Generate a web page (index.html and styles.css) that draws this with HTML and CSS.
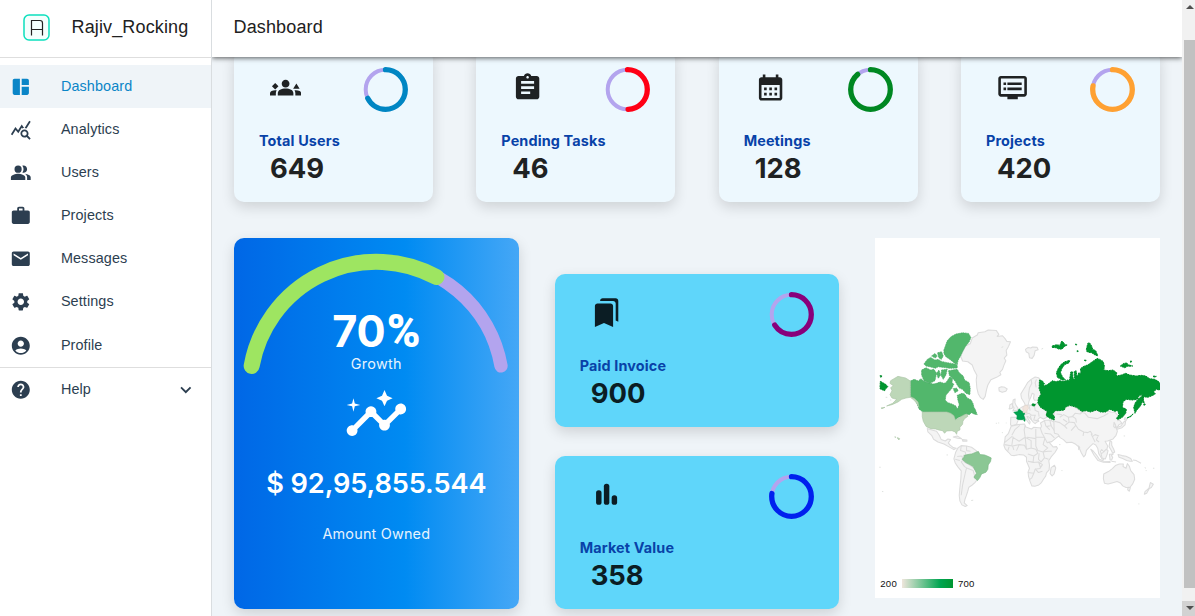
FILE: index.html
```html
<!DOCTYPE html>
<html lang="en">
<head>
<meta charset="utf-8">
<title>Dashboard</title>
<link rel="stylesheet" href="styles.css">
</head>
<body>
<div class="app">
  <aside class="sidebar">
    <div class="brand">
      <svg class="brand-logo" viewBox="0 0 27 27"><rect x="1" y="1" width="25" height="25" rx="5" fill="#f4fffd" stroke="#0be0bd" stroke-width="1.5"/><path d="M8.500 21.500V6.500H17q2.500 0 2.500 2.500v12.500M8.500 15.500h11" fill="none" stroke="#222" stroke-width="1.2"/></svg>
      <span>Rajiv_Rocking</span>
    </div>
    <nav class="nav">
      <a class="nav-item active"><svg viewBox="0 0 24 24"><path d="M11 21H5c-1.1 0-2-.9-2-2V5c0-1.1.9-2 2-2h6v18zm2 0h6c1.1 0 2-.9 2-2v-7h-8v9zm8-11V5c0-1.1-.9-2-2-2h-6v7h8z"/></svg><span>Dashboard</span></a>
      <a class="nav-item"><svg viewBox="0 0 24 24"><path d="M19.88 18.47c.44-.7.7-1.51.7-2.39 0-2.49-2.01-4.5-4.5-4.5s-4.5 2.01-4.5 4.5 2.01 4.5 4.49 4.5c.88 0 1.7-.26 2.39-.7L21.58 23 23 21.58l-3.12-3.11zm-3.8.11c-1.38 0-2.5-1.12-2.5-2.5s1.12-2.5 2.5-2.5 2.5 1.12 2.5 2.5-1.12 2.5-2.5 2.5zm-.36-8.5c-.74.02-1.45.18-2.1.45l-.55-.83-3.8 6.18-3.01-3.52-3.63 5.81L1 17l5-8 3 3.5L13 6l2.72 4.08zm2.59.5c-.64-.28-1.33-.45-2.05-.49L21.38 2 23 3.18l-4.69 7.4z"/></svg><span>Analytics</span></a>
      <a class="nav-item"><svg viewBox="0 0 24 24"><path d="M16.67 13.13C18.04 14.06 19 15.32 19 17v3h4v-3c0-2.18-3.57-3.47-6.33-3.87zM15 12c2.21 0 4-1.79 4-4s-1.79-4-4-4c-.47 0-.91.1-1.33.24C14.5 5.27 15 6.58 15 8s-.5 2.73-1.33 3.76c.42.14.86.24 1.33.24zM9 12a4 4 0 1 0 0-8 4 4 0 0 0 0 8zm0 1c-2.67 0-8 1.34-8 4v3h16v-3c0-2.66-5.33-4-8-4z"/></svg><span>Users</span></a>
      <a class="nav-item"><svg viewBox="0 0 24 24"><path d="M20 6h-4V4c0-1.11-.89-2-2-2h-4c-1.11 0-2 .89-2 2v2H4c-1.11 0-1.99.89-1.99 2L2 19c0 1.11.89 2 2 2h16c1.11 0 2-.89 2-2V8c0-1.11-.89-2-2-2zm-6 0h-4V4h4v2z"/></svg><span>Projects</span></a>
      <a class="nav-item"><svg viewBox="0 0 24 24"><path d="M20 4H4c-1.1 0-1.99.9-1.99 2L2 18c0 1.1.9 2 2 2h16c1.1 0 2-.9 2-2V6c0-1.1-.9-2-2-2zm0 4l-8 5-8-5V6l8 5 8-5v2z"/></svg><span>Messages</span></a>
      <a class="nav-item"><svg viewBox="0 0 24 24"><path d="M19.14 12.94c.04-.3.06-.61.06-.94 0-.32-.02-.64-.07-.94l2.03-1.58c.18-.14.23-.41.12-.61l-1.92-3.32c-.12-.22-.37-.29-.59-.22l-2.39.96c-.5-.38-1.03-.7-1.62-.94l-.36-2.54c-.04-.24-.24-.41-.48-.41h-3.84c-.24 0-.43.17-.47.41l-.36 2.54c-.59.24-1.13.57-1.62.94l-2.39-.96c-.22-.08-.47 0-.59.22L2.74 8.87c-.12.21-.08.47.12.61l2.03 1.58c-.05.3-.09.63-.09.94s.02.64.07.94l-2.03 1.58c-.18.14-.23.41-.12.61l1.92 3.32c.12.22.37.29.59.22l2.39-.96c.5.38 1.03.7 1.62.94l.36 2.54c.05.24.24.41.48.41h3.84c.24 0 .44-.17.47-.41l.36-2.54c.59-.24 1.13-.56 1.62-.94l2.39.96c.22.08.47 0 .59-.22l1.92-3.32c.12-.22.07-.47-.12-.61l-2.01-1.58zM12 15.6c-1.98 0-3.6-1.62-3.6-3.6s1.62-3.6 3.6-3.6 3.6 1.62 3.6 3.6-1.62 3.6-3.6 3.6z"/></svg><span>Settings</span></a>
      <a class="nav-item low"><svg viewBox="0 0 24 24"><path d="M12 2C6.48 2 2 6.48 2 12s4.48 10 10 10 10-4.48 10-10S17.52 2 12 2zm0 4c1.93 0 3.5 1.57 3.5 3.5S13.93 13 12 13s-3.5-1.57-3.5-3.5S10.07 6 12 6zm0 14c-2.03 0-4.43-.82-6.14-2.88C7.55 15.8 9.68 15 12 15s4.45.8 6.14 2.12C16.43 19.18 14.03 20 12 20z"/></svg><span>Profile</span></a>
      <a class="nav-item low help"><svg viewBox="0 0 24 24"><path d="M12 2C6.48 2 2 6.48 2 12s4.48 10 10 10 10-4.48 10-10S17.52 2 12 2zm1 17h-2v-2h2v2zm2.07-7.75l-.9.92C13.45 12.9 13 13.5 13 15h-2v-.5c0-1.1.45-2.1 1.17-2.83l1.24-1.26c.37-.36.59-.86.59-1.41 0-1.1-.9-2-2-2s-2 .9-2 2H8c0-2.21 1.79-4 4-4s4 1.79 4 4c0 .88-.36 1.68-.93 2.25z"/></svg><span>Help</span><svg class="chevron" viewBox="0 0 24 24"><path d="M16.59 8.59 12 13.17 7.41 8.59 6 10l6 6 6-6z"/></svg></a>
    </nav>
  </aside>

  <main class="main">
    <header class="topbar">Dashboard</header>
    <div class="content">
      <section class="stats">
        <article class="card light">
          <div class="card-top">
            <svg class="card-icon" viewBox="0 0 24 24"><path d="M12 12.75c1.63 0 3.07.39 4.24.9 1.08.48 1.76 1.56 1.76 2.73V18H6v-1.61c0-1.18.68-2.26 1.76-2.73 1.17-.52 2.61-.91 4.24-.91zM4 8.4 6.5 10.9 4 13.4 1.5 10.9zM5.13 14.1c-.37-.06-.74-.1-1.13-.1-.99 0-1.93.21-2.78.58C.48 14.9 0 15.62 0 16.43V18h4.5v-1.61c0-.83.23-1.61.63-2.29zM20.3 8.8l2.5 4.1h-5zM24 16.43c0-.81-.48-1.53-1.22-1.85-.85-.37-1.79-.58-2.78-.58-.39 0-.76.04-1.13.1.4.68.63 1.46.63 2.29V18H24v-1.57zM12 6c1.66 0 3 1.34 3 3s-1.34 3-3 3-3-1.34-3-3 1.34-3 3-3z"/></svg>
            <svg class="ring" viewBox="0 0 45 45"><circle class="trail" cx="22.5" cy="22.5" r="19.8"/><circle class="value" cx="22.5" cy="22.5" r="19.8" pathLength="100" stroke="#0086c3" stroke-dasharray="67.6 100"/></svg>
          </div>
          <h3>Total Users</h3><p class="figure">649</p>
        </article>
        <article class="card light">
          <div class="card-top">
            <svg class="card-icon" viewBox="0 0 24 24"><path d="M19 3h-4.18C14.4 1.84 13.3 1 12 1c-1.3 0-2.4.84-2.82 2H5c-1.1 0-2 .9-2 2v14c0 1.1.9 2 2 2h14c1.1 0 2-.9 2-2V5c0-1.1-.9-2-2-2zm-7 0c.55 0 1 .45 1 1s-.45 1-1 1-1-.45-1-1 .45-1 1-1zm2 14H7v-2h7v2zm3-4H7v-2h10v2zm0-4H7V7h10v2z"/></svg>
            <svg class="ring" viewBox="0 0 45 45"><circle class="trail" cx="22.5" cy="22.5" r="19.8"/><circle class="value" cx="22.5" cy="22.5" r="19.8" pathLength="100" stroke="#ff0015" stroke-dasharray="49.5 100"/></svg>
          </div>
          <h3>Pending Tasks</h3><p class="figure">46</p>
        </article>
        <article class="card light">
          <div class="card-top">
            <svg class="card-icon" viewBox="0 0 24 24"><path d="M19 4h-1V2h-2v2H8V2H6v2H5c-1.11 0-1.99.9-1.99 2L3 20c0 1.1.89 2 2 2h14c1.1 0 2-.9 2-2V6c0-1.1-.9-2-2-2zm0 16H5V10h14v10zM9 14H7v-2h2v2zm4 0h-2v-2h2v2zm4 0h-2v-2h2v2zm-8 4H7v-2h2v2zm4 0h-2v-2h2v2zm4 0h-2v-2h2v2z"/></svg>
            <svg class="ring" viewBox="0 0 45 45"><circle class="trail" cx="22.5" cy="22.5" r="19.8"/><circle class="value" cx="22.5" cy="22.5" r="19.8" pathLength="100" stroke="#008822" stroke-dasharray="88.8 100"/></svg>
          </div>
          <h3>Meetings</h3><p class="figure">128</p>
        </article>
        <article class="card light">
          <div class="card-top">
            <svg class="card-icon" viewBox="0 0 24 24"><path d="M21 3H3c-1.1 0-2 .9-2 2v12c0 1.1.9 2 2 2h5v2h8v-2h5c1.1 0 1.99-.9 1.99-2L23 5c0-1.1-.9-2-2-2zm0 14H3V5h18v12zm-2-9H8v2h11V8zm0 4H8v2h11v-2zM7 8H5v2h2V8zm0 4H5v2h2v-2z"/></svg>
            <svg class="ring" viewBox="0 0 45 45"><circle class="trail" cx="22.5" cy="22.5" r="19.8"/><circle class="value" cx="22.5" cy="22.5" r="19.8" pathLength="100" stroke="#ffa132" stroke-dasharray="78 100"/></svg>
          </div>
          <h3>Projects</h3><p class="figure">420</p>
        </article>
      </section>

      <section class="panels">
        <article class="growth">
          <div class="gauge">
            <svg viewBox="12 9 855 420"><g fill="none" stroke-linecap="round"><path d="M65 393A380.3 380.3 0 0 1 814 393" stroke="#b3a4ee" stroke-width="40"/><path d="M65 393A380.3 380.3 0 0 1 620 126" stroke="#9ee561" stroke-width="48"/></g></svg>
            <div class="gauge-text"><strong>70<b class="pct">%</b></strong><span>Growth</span></div>
          </div>
          <svg class="insights" viewBox="0 0 24 24"><path d="M21 8c-1.45 0-2.26 1.44-1.93 2.51l-3.55 3.56c-.3-.09-.74-.09-1.04 0l-2.55-2.55C12.27 10.45 11.46 9 10 9c-1.45 0-2.27 1.44-1.93 2.52l-4.56 4.55C2.44 15.74 1 16.55 1 18c0 1.1.9 2 2 2 1.45 0 2.26-1.44 1.93-2.51l4.55-4.56c.3.09.74.09 1.04 0l2.55 2.55C12.73 16.55 13.54 18 15 18c1.45 0 2.27-1.44 1.93-2.52l3.56-3.55C21.56 12.26 23 11.45 23 10c0-1.1-.9-2-2-2zM15 9l.94-2.07L18 6l-2.06-.93L15 3l-.92 2.07L12 6l2.08.93zM3.5 11 4 9l2-.5L4 8l-.5-2L3 8l-2 .5L3 9z"/></svg>
          <p class="amount">$ 92,95,855.544</p>
          <p class="amount-label">Amount Owned</p>
        </article>

        <div class="stack">
          <article class="card sky">
            <div class="card-top">
              <svg class="card-icon" viewBox="0 0 24 24"><path d="M19 18l2 1V3c0-1.1-.9-2-2-2H8.990C7.890 1 7 1.900 7 3h10c1.100 0 2 .900 2 2v13zM15 5H5c-1.100 0-2 .900-2 2v16l7-3 7 3V7c0-1.100-.900-2-2-2z"/></svg>
              <svg class="ring" viewBox="0 0 45 45"><circle class="trail" cx="22.5" cy="22.5" r="19.8"/><circle class="value" cx="22.5" cy="22.5" r="19.8" pathLength="100" stroke="#88007b" stroke-dasharray="66 100"/></svg>
            </div>
            <h3>Paid Invoice</h3><p class="figure">900</p>
          </article>
          <article class="card sky">
            <div class="card-top">
              <svg class="card-icon" viewBox="0 0 24 24"><rect x="3.900" y="8.600" width="4.200" height="11.200" rx="2"/><rect x="9.900" y="3.600" width="4.200" height="16.200" rx="2"/><rect x="15.900" y="12.600" width="4.200" height="7.200" rx="2"/></svg>
              <svg class="ring" viewBox="0 0 45 45"><circle class="trail" cx="22.5" cy="22.5" r="19.8"/><circle class="value" cx="22.5" cy="22.5" r="19.8" pathLength="100" stroke="#0020ee" stroke-dasharray="77.5 100"/></svg>
            </div>
            <h3>Market Value</h3><p class="figure">358</p>
          </article>
        </div>

        <article class="map">
          <svg class="world" viewBox="15 -246 855 975">
            <g class="land">
              <!-- Greenland and Iceland -->
              <path d="M275 100l12-22 14-7 6-17 15-9 3-7 20-3 10-5 24 1 8 12-5 6 16-2 7 8 6 9 11 1-6 14-7 12 2 14-8 9 5 8-6 14-4 12-8 9 3 7-13 8-17 7-9 16-4 14-4 20-6 9-8-5-7-12-4-17-2-24 2-14-8-15-6-16-13-10-16-2-6-16z"/>
              <path d="M387 203l8-3 10 2 7 5-4 7-11 3-9-4z"/>
              <!-- Svalbard -->
              <path d="M467 88l8-6 8 2 5-3 14 1 3 7-9 3-3 14-6 9-8-2-2-13-8-5z"/>
              <!-- British Isles -->
              <path d="M430 240l6-3-1 10 4 10 6 8-3 6-13 2 4-9-5-7zM420 255l6-4 3 6-2 8-8 2z"/>
              <!-- Scandinavia and Finland -->
              <path d="M455 235l-2-13 7-12 7-11 7-12 10-9 12-7 10 2 5 6-2 10 2 16 2 15 1 13-8 7-12 1-3-6 2-12-6-3-4 12-5 10-3 14-7 6-4-13z"/>
              <path class="border" d="M484 178l2 12-7 14-3 20 2 14M500 178l-4 10 3 14"/>
              <!-- Europe -->
              <path d="M446 268l12-8 10-4 9-1 12 2 13-7 8 4 6 7 10 2 9 4 8 14-10 10-12 6-10-5-7 6 3 6-7 3-4 4-5-4-7-8-7-8-6-2 5 9 5 8-2 6-9-12-7-11-7-2-8 5-4-2 5-12-4-9z"/>
              <path d="M423 292l14 0 10 5-4 8-3 9-12 3-6-2z"/>
              <path class="border" d="M456 280l12 3 10-3 8 6 12 0M478 258l3 14M494 257l2 14 12 6M481 286l4 14M496 286l-4 14 12 2M506 276l2 14"/>
              <!-- Africa -->
              <path d="M424 319l20-5 20-2 4 9 17 6 7-5 22 2 7 8 6 14 8 14 7 12 8 9 10-1 3 5-7 12-12 14-7 11 2 14-1 14-8 9-2 9-7 10-6 10-8 7-12 4-9-1-5-13-5-16-1-13 4-11-5-12-4-9 0-12-9-7-12-1-15 3-10-1-8-9-10-10-4-11 3-15 1-10 10-11z"/>
              <path d="M544 443l10-7 4 8-5 18-6 6-6-7z"/>
              <path class="border" d="M466 316l-3 14 3 22-18 12-22-14-22 18M426 346l10-18 14-12M466 352l18 10 0 22-14 4-4-36M498 326v30l-26-4M498 352h28M526 352l-6 22 14 10-14 12-16-4-6-14 0-22M484 384l14 4 6 12-12 8-18-6M404 374l24 4 4 12M428 378l20-4 16 2 6 12M448 374l-8 18M430 350l-4 26M520 396l4 18-10 12-8-8 2-18M478 404l14 4-2 18-16-2M474 424l16 4 16-2 12 8-8 12-14 2-4 12-18-2M496 446l10 12 12-4M492 460l-6 14-8 6M506 426l6 16M520 396l14-2 12 0M526 414l10 4M414 392l4-12"/>
              <!-- Middle East -->
              <path d="M512 309l14-8 16-1 10 6 12 4 12 8 8 12-4 6-5 8-12 7-17 14-14 3-7-14-8-14-5-14 3-8z"/>
              <path class="border" d="M524 302l4 16 12 12M540 300l4 18 10 14 14 4M530 320l16-4M524 340l18 2 12 12"/>
              <!-- Central, South and East Asia -->
              <path d="M552 292l2-18 14-6 16-2 3-7 20-2 12 7 14 9 11 0 12-4 14 4 16-4 14 4 14 0 9 3 13 1 10 11-2 14 5-2 8 10-9 4-5 8-4-2 4 14-4 12-9 11-16 6-8 1 8 14-3 12-9 6-6-7-4 6 6 12 4 12-5-2-10-16-3-16-6-10-8-4-9 8-11 12-3 14-5 6-7-12-8-18-9-8-12-6-16 1-9-9-10-6-6-10-11-3-1-9z"/>
              <path class="border" d="M570 292l12-8 14 8 12-2 8-10 16 2 8-8M632 276l14 4 10 12 26 4 20-8 14-8M596 292l2 14-14 12 8 8M598 306l16 2 4 8-14 16M618 316l8 12 16 8 12 2 8-4M606 288l12 8 2 12M642 336l-2 12M664 342l4 8 8-6 12 4M662 334l6 10M554 304l16 4 14 10M668 350l8 16M684 350l-4 10 8 6M560 282l16 2M580 298l12 8"/>
              <!-- Japan, Korea, Philippines -->
              <path d="M766 293l6 3-2 5-6-2zM768 303l-2 12-9 8-15 5-1-5 13-5 8-12zM733 307l5 9-1 8-5-4zM721 362l5 4 0 10 6 12 3 8-6 4-5-10-6-10zM626 378l4 5-3 6z"/>
              <!-- Indonesia and New Guinea -->
              <path d="M663 388l8 6 10 12 8 12 14 6 18 1 0 3-20-1-16-5-12-16zM694 402l8-6 7-8 6 4-3 12-5 13-10-3zM719 403l12-1-6 5 4 5-3 8-5 0zM745 404l12 3 12 2 14 7 5 8-7 0-10-2-12-6-11-4zM725 424l14 2M790 420l10 2 14 8"/>
              <!-- Australia and New Zealand -->
              <path d="M702 462l14-7 12-9 9-9 12-5 12 0-1 8 9 5 4-14 6 8 4 13 10 12 2 14-6 14-8 10-12 1-10-5-7-9-10-4-15 4-12 3-11-2-3-14zM775 502l7 1-3 11-5-4zM842 488l9 5-6 10-6 3-8 14-7 3 2-8 12-10z"/>
              <!-- Mexico and Central America -->
              <path d="M172 326l14 4 14 4 8 12 6 13 12 4 8-6 8 2-7 10 5 6 10 8 9 2-7 4-16-9-14-8-18-6-13-8-6-12-11-10z"/>
              <path d="M250 351l12-3 13 8-12-1zM277 359l14 1 0 4-12 0z"/>
              <!-- South America -->
              <path d="M257 398l7-14 10-7 16 1 15 4 14 10 8 8 0 8-46-2-4 12 6 8 14 8 12 8 12 12 7 10-4 13-9 11-9 8-9 6-4 14-4 12-4 11-2 10 9 8-6 3-10-5-6-12-2-16 2-24 3-28 1-22-10-12-8-12-4-12z"/>
              <path class="border" d="M282 418l-8 8 10 14 6 4-4 16-8 36-4 30M262 410l12-2 8 10M274 378l-2 14 14 4 2 10M290 378v14l12 2M290 444l20 8 4 16 2 10M256 418l14 4"/>
            </g>
            <!-- Canada -->
            <path class="ca" d="M121 183L133 178 145 183 153 176 162 184 175 188 190 192 200 190 210 186 222 190 228 188 235 178 240 170 248 176 246 188 252 192 246 205 238 214 228 226 226 240 234 248 246 252 258 258 262 268 268 254 264 240 262 226 276 220 284 222 292 234 304 240 310 252 312 262 316 268 322 284 312 282 305 278 298 284 288 282 280 288 266 292 256 300 252 290 240 283 228 276 159 276 147 267 142 253 135 238 121 230Z"/>
            <path class="ca" d="M222 90L232 62 243 50 258 42 278 38 296 40 303 52 298 65 286 80 278 95 272 108 265 120 262 132 255 130 240 118 228 110 222 100ZM162 132L172 118 182 112 195 120 205 118 215 124 228 127 262 133 262 144 240 145 205 140 196 145 180 140 168 138ZM185 108L195 100 202 108 196 114ZM203 98L215 95 220 108 214 118 206 112ZM155 150L168 143 182 150 192 148 200 160 195 182 180 190 162 182 155 165ZM200 160L207 150 212 165 205 175ZM215 150L232 148 228 165 220 178 213 165ZM236 152L248 150 262 148 268 158 280 168 284 180 298 188 301 205 300 224 288 220 278 208 268 204 262 195 256 184 248 175 238 166ZM250 206l10-2 5 8-10 6z"/>
            <!-- United States, Alaska and Hawaii -->
            <path class="us" d="M121 183L107 174 93 171 84 169 72 176 62 182 60 190 70 197 62 203 66 212 60 224 66 234 80 238 68 250 50 258 66 254 84 246 95 238 108 234 121 232 132 240 142 252 147 262 144 246 134 236 121 230ZM157 276H230L242 280 252 287 256 300 268 293 282 285 291 282 294 289 284 296 279 304 278 313 270 322 270 330 262 334 260 343 256 336 246 332 230 333 224 340 218 332 206 330 197 327 183 326 169 320 160 304 157 290ZM82 353l7 3-2 4-4-4zM33 264l12-2-9 4zM74 351l4 1z"/>
            <!-- Brazil -->
            <path class="br" d="M284 406L298 403 306 402 320 396 326 395 330 404 344 405 356 410 364 414 362 425 355 435 354 448 348 457 335 462 330 473 323 482 312 472 320 460 316 452 310 440 300 434 288 428 277 418 282 412Z"/>
            <!-- Russia -->
            <path class="ru" d="M509 180L517 182 524 191 520 197 531 195 538 190 548 182 558 185 570 182 577 184 586 183 594 180 599 182 603 156 608 155 610 175 615 180 613 155 619 152 622 172 627 158 634 162 632 146 640 140 655 134 668 125 682 115 690 118 700 124 704 138 702 150 715 152 730 150 741 158 740 168 755 165 768 160 780 165 800 168 815 166 828 168 840 176 855 178 866 184 872 192 871 210 860 208 852 215 857 222 845 228 834 232 822 230 820 242 812 258 800 272 796 280 792 262 797 248 806 236 815 230 818 222 808 228 802 238 788 240 770 238 760 245 758 262 770 268 768 280 758 292 746 298 740 296 748 284 744 272 735 274 720 268 708 276 692 276 680 270 662 276 650 272 636 274 620 262 600 256 586 262 584 270 568 272 556 272 548 282 554 290 553 300 540 295 529 287 532 274 522 268 512 262 504 248 506 234 514 222 508 206Z"/>
            <path class="ru" d="M563 172l-3-14 5-12 8-12 12-9 15-4-2 7-14 6-8 12-4 12 7 14 8 7-10 1zM547 78l13-4 10 2 6-13 6 5 3 5 7 2-8 4-7 8-10 0-8-4-12-1zM650 88l4-18 5-2 6 8 4 12 9 4 6 15-8-2-10-7-8-1-7-3zM752 138l10-8 10-1 3 5 14 4-16 1-8 4zM622 92l4 1-3 3zM617 72l4 1-2 3zM644 120l6 1-4 2zM782 123l5 1-4 3zM851 168l9 1-7 3zM31 184l16 9 7 7-7 6-3 6-8-3-6-3zM30 167l7 1-5 4zM819 227l2 12 3 12-6-9zM821 254l7-1-5 3zM772 294l10-5 9-8-8 9zM487 252l9 0-1 6-8-1z"/>
            <!-- France and Germany -->
            <path class="fr" d="M432 277l11-2 5-8 8 7 9 4-3 9 3 9-7 3-9 0-8-2 1-10zM463 297l3 1-1 6-3-2z"/>
            <path class="de" d="M459 263l7-7 8 1 2 8-5 8 1 5-12 0z"/>
            <g class="islets"><path d="M395 82l5-2M515 87l5-2M230 405h4M28 442h4M36 515h4M378 310h3M385 309h3M304 542l6-1M568 374h4M575 452h3M762 348h4M806 552h3M825 443l4 2M850 445h4M828 452h3M396 338h3M408 309h2M416 266h3M47 232h5M60 240h4"/></g>
          </svg>
          <div class="legend"><span>200</span><i></i><span>700</span></div>
        </article>
      </section>
    </div>
  </main>

  <div class="scrollbar">
    <svg class="arrow" viewBox="0 0 8 4"><path d="M0 4 4 0l4 4z"/></svg>
    <div class="thumb"></div>
    <div class="down"><svg class="arrow" viewBox="0 0 8 4"><path d="M0 0h8L4 4z"/></svg></div>
  </div>
</div>
</body>
</html>
```
FILE: styles.css
```css
* { box-sizing: border-box; }
body { margin: 0; font-family: "Liberation Sans", Arial, sans-serif; background: #eff4f8; overflow: hidden; }
h3, p { margin: 0; }
svg { display: block; }
.app { display: flex; height: 616px; overflow: hidden; }

.sidebar { width: 212px; flex: none; background: #fff; border-right: 1px solid #d9dde0; }
.brand { display: flex; align-items: center; gap: 21.5px; height: 58px; padding: 0 0 3px 23px; border-bottom: 1px solid #dedede; font-size: 18px; color: #212121; letter-spacing: .14px; }
.brand-logo { width: 27px; height: 27px; margin-top: 1px; }
.nav { padding-top: 7px; }
.nav-item { display: flex; align-items: center; height: 43.15px; padding-left: 10px; font-size: 14.4px; letter-spacing: .11px; color: #2c3e50; }
.nav-item svg { width: 21.6px; height: 21.6px; margin-right: 29.3px; fill: currentColor; }
.nav-item span { padding-bottom: 2px; }
.nav-item.low span { padding-bottom: 0; }
.nav-item.active { background: #eff4f8; color: #0a85c7; }
.nav-item.help { border-top: 1px solid #dedede; height: 44px; }
.nav-item .chevron { margin: 0 14px 0 auto; }

.main { flex: 1; min-width: 0; display: flex; flex-direction: column; }
.topbar { height: 57px; flex: none; z-index: 1; background: #fff; padding: 17px 0 0 21.5px; font-size: 18px; line-height: 21px; letter-spacing: .14px; color: #212121; box-shadow: 0 1px 5px rgba(0,0,0,.65); clip-path: inset(0 0 -12px 0); }
.content { flex: 1; min-height: 0; margin-top: -8px; padding: 0 22px; font-family: Inter, sans-serif; }
.stats { display: grid; grid-template-columns: repeat(4, 1fr); gap: 43.3px; }
.card { height: 153px; padding: 18px 25px 0; border-radius: 10px; box-shadow: 0 5px 14px rgba(0,0,0,.14); color: #1f2223; }
.light { background: #edf8fe; }
.sky { background: #5fd6fa; color: #0b1d24; }
.card-top { display: flex; justify-content: space-between; align-items: flex-start; padding-left: 11px; height: 64px; }
.card-icon { width: 31.2px; height: 31.2px; margin-top: 4.5px; fill: currentColor; }
.ring { width: 45px; height: 45px; transform: rotate(-90deg); }
.ring circle { fill: none; stroke-linecap: round; }
.trail { stroke: #b3a4ee; stroke-width: 4; }
.value { stroke-width: 5.3; }
.card h3 { font-size: 14.4px; line-height: 20px; font-weight: 700; letter-spacing: .14px; color: #0842a8; }
.figure { padding-left: 11px; font-size: 27.4px; line-height: 34px; font-weight: 700; }

.panels { display: grid; grid-template-columns: repeat(3, 1fr); gap: 36px; margin-top: 36px; height: 371px; }
.growth { display: flex; flex-direction: column; align-items: center; border-radius: 10px; background: linear-gradient(90deg, #0067e6 0%, #008bf2 60%, #45a7f6 100%); box-shadow: 0 5px 14px rgba(0,0,0,.14); color: #fff; }
.gauge { display: grid; width: 100%; height: 140px; }
.gauge > * { grid-area: 1 / 1; }
.gauge svg { width: 100%; height: 140px; }
.gauge-text { display: flex; flex-direction: column; align-items: center; padding-top: 69px; }
.gauge-text strong { font-size: 43.2px; line-height: 48px; font-weight: 700; }
.pct { font-family: Roboto, sans-serif; font-size: 45.5px; line-height: 1; margin-left: 1px; }
.gauge-text span { font-size: 14.4px; line-height: 18px; letter-spacing: .3px; opacity: .9; }
.insights { width: 64.8px; height: 64.8px; margin-top: 4px; fill: #fff; }
.amount { margin-top: 20px; font-size: 27.2px; line-height: 34px; font-weight: 600; letter-spacing: -.1px; white-space: nowrap; }
.amount-label { margin-top: 22px; font-size: 14.4px; line-height: 22px; letter-spacing: .2px; opacity: .9; }

.stack { display: flex; flex-direction: column; gap: 29px; padding-top: 36px; }
.map { height: 360px; background: #fff; overflow: hidden; }
.world { width: 100%; height: 325px; stroke-linejoin: round; }
.land { fill: #f4f4f4; stroke: #dcdcdc; stroke-width: 3.2; }
.land .border { fill: none; }
.ca { fill: #52b76c; stroke: #47a863; stroke-width: 2; stroke-dasharray: 5 2; }
.us { fill: #bdd7b8; stroke: #acc6a7; stroke-width: 2; }
.br { fill: #8bc794; stroke: #78b783; stroke-width: 2; }
.ru { fill: #00962f; stroke: #008b2b; stroke-width: 3; stroke-dasharray: 6 2; }
.fr { fill: #00a450; stroke: #009346; stroke-width: 2; }
.de { fill: #f1e4dc; stroke: #e2d5cc; stroke-width: 2; }
.islets { fill: none; stroke: #d8dcd8; stroke-width: 2.5; }
.legend { display: flex; align-items: center; gap: 5px; height: 13px; margin-top: 14px; padding-left: 5px; font: 9.6px/13px "Liberation Sans", Arial, sans-serif; letter-spacing: .2px; color: #111; }
.legend i { width: 51px; height: 9px; background: linear-gradient(90deg, #efe6dc, #00a551 75%, #009631); }

.scrollbar { width: 13px; flex: none; display: flex; flex-direction: column; background: #f1f1f1; }
.arrow { width: 8px; height: 4px; margin: 5px 0 0 3.5px; fill: #505050; }
.thumb { height: 548px; margin: 31px 0 13px 2px; background: #c1c1c1; }
.down { height: 15px; background: #d2d2d2; display: flow-root; }
```
